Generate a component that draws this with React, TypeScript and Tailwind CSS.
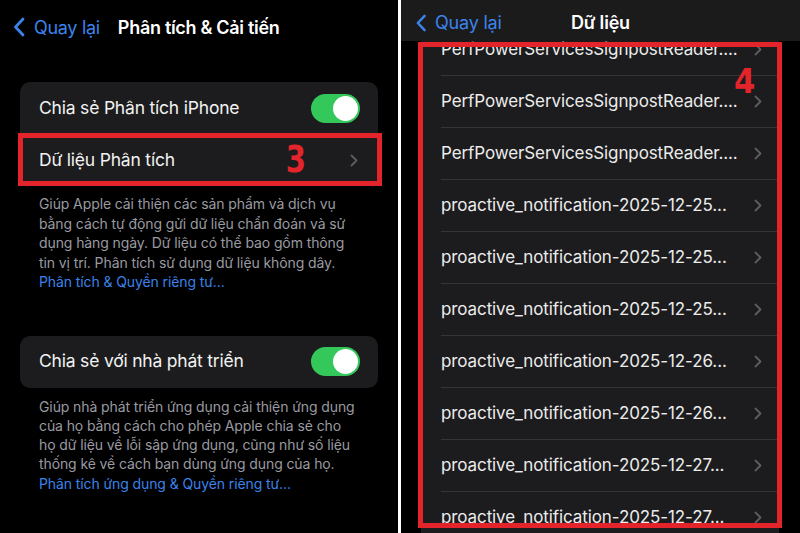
import React from "react";

function BackChevron({ className }: { className?: string }) {
  return (
    <svg viewBox="0 0 12 20" className={className} fill="none">
      <path d="M10 2 L2.5 10 L10 18" stroke="currentColor" strokeWidth="2.8" strokeLinecap="round" strokeLinejoin="round" />
    </svg>
  );
}

function CellChevron() {
  return (
    <svg viewBox="0 0 8 13" className="w-[8px] h-[13px] text-[#5c5c61]" fill="none">
      <path d="M1.5 1.5 L6.5 6.5 L1.5 11.5" stroke="currentColor" strokeWidth="1.8" strokeLinecap="round" strokeLinejoin="round" />
    </svg>
  );
}

function Toggle() {
  return (
    <div className="w-[49px] h-[29px] rounded-full bg-[#34c759] flex items-center justify-end p-[2px]">
      <div className="w-[25px] h-[25px] rounded-full bg-white" />
    </div>
  );
}

const files = [
  "PerfPowerServicesSignpostReader....",
  "PerfPowerServicesSignpostReader....",
  "PerfPowerServicesSignpostReader....",
  "proactive_notification-2025-12-25...",
  "proactive_notification-2025-12-25...",
  "proactive_notification-2025-12-25...",
  "proactive_notification-2025-12-26...",
  "proactive_notification-2025-12-26...",
  "proactive_notification-2025-12-27...",
  "proactive_notification-2025-12-27...",
];

const analyticsNote = [
  "Giúp Apple cải thiện các sản phẩm và dịch vụ",
  "bằng cách tự động gửi dữ liệu chẩn đoán và sử",
  "dụng hàng ngày. Dữ liệu có thể bao gồm thông",
  "tin vị trí. Phân tích sử dụng dữ liệu không dây.",
];

const developerNote = [
  "Giúp nhà phát triển ứng dụng cải thiện ứng dụng",
  "của họ bằng cách cho phép Apple chia sẻ cho",
  "họ dữ liệu về lỗi sập ứng dụng, cũng như số liệu",
  "thống kê về cách bạn dùng ứng dụng của họ.",
];

function Footnote({ lines, link, spacing }: { lines: string[]; link: string; spacing: string }) {
  return (
    <div className={`px-[39px] text-[14px] text-[#9a9aa0] tracking-[-0.1px] whitespace-nowrap ${spacing}`}>
      {lines.map((l, i) => (
        <p key={i}>{l}</p>
      ))}
      <p className="text-[#3b83ea]">{link}</p>
    </div>
  );
}

function SettingsPane() {
  return (
    <div className="w-[398px] h-full bg-black relative shrink-0">
      {/* navigation bar */}
      <div className="h-[54px] flex items-center pl-[13px]">
        <BackChevron className="w-[12px] h-[20px] text-[#3b83ea]" />
        <span className="ml-[9px] text-[18px] text-[#3b83ea] tracking-[-0.3px]">Quay lại</span>
        <span className="ml-[18px] text-[18px] font-semibold text-white tracking-[-0.3px]">Phân tích &amp; Cải tiến</span>
      </div>

      {/* analytics group */}
      <div className="mt-[28px] mx-[20px] rounded-[10px] bg-[#1c1c1e]">
        <div className="h-[52px] flex items-center justify-between pl-[19px] pr-[18px]">
          <span className="text-[17.5px] text-[#f2f2f2] tracking-[-0.2px]">Chia sẻ Phân tích iPhone</span>
          <Toggle />
        </div>
        <div className="h-[52px] flex items-center justify-between pl-[19px] pr-[20px]">
          <span className="text-[17.5px] text-[#f2f2f2] tracking-[-0.2px]">Dữ liệu Phân tích</span>
          <CellChevron />
        </div>
      </div>
      <div className="mt-[8px]">
        <Footnote lines={analyticsNote} link="Phân tích & Quyền riêng tư..." spacing="leading-[19.5px]" />
      </div>

      {/* developer group */}
      <div className="mt-[44px] mx-[20px] rounded-[10px] bg-[#1c1c1e]">
        <div className="h-[52px] flex items-center justify-between pl-[19px] pr-[18px]">
          <span className="text-[17.5px] text-[#f2f2f2] tracking-[-0.2px]">Chia sẻ với nhà phát triển</span>
          <Toggle />
        </div>
      </div>
      <div className="mt-[9px]">
        <Footnote lines={developerNote} link="Phân tích ứng dụng & Quyền riêng tư..." spacing="leading-[19.3px]" />
      </div>

      {/* step marker */}
      <div className="absolute left-[18px] top-[133px] w-[364px] h-[53px] border-[5px] border-[#e3242b]" />
      <span className="absolute left-[284px] top-[140px] text-[38px] leading-none font-bold text-[#e3242b] font-['DejaVu_Sans_Condensed',sans-serif] scale-x-[0.85]">3</span>
    </div>
  );
}

function DataPane() {
  return (
    <div className="w-[399px] h-full bg-black relative overflow-hidden shrink-0">
      {/* file list */}
      <div className="pt-[24px] pl-[20px] pr-[21px]">
        <div className="bg-[#1c1c1e]">
          {files.map((name, i) => (
            <div key={i} className="h-[52px] flex pl-[20px]">
              <div className="flex-1 flex items-center justify-between border-b border-[#343437] pr-[17px]">
                <span className="text-[17px] text-[#ececec] tracking-[-0.1px]">{name}</span>
                <CellChevron />
              </div>
            </div>
          ))}
        </div>
      </div>

      {/* navigation bar */}
      <div className="absolute top-0 left-0 right-0 h-[41px] bg-[#1b1b1c] grid grid-cols-[1fr_auto_1fr] items-center pt-[4px] z-10">
        <div className="flex items-center pl-[14px]">
          <BackChevron className="w-[12px] h-[18px] text-[#3b83ea]" />
          <span className="ml-[8px] text-[18px] text-[#3b83ea] tracking-[-0.2px]">Quay lại</span>
        </div>
        <span className="text-[18px] font-semibold text-white tracking-[-0.2px]">Dữ liệu</span>
        <div />
      </div>

      {/* step marker */}
      <div className="absolute left-[17px] top-[42px] w-[364px] h-[486px] border-[5px] border-[#e3242b] z-20" />
      <span className="absolute left-[333px] top-[64px] text-[34px] leading-none font-bold text-[#e3242b] font-['DejaVu_Sans_Condensed',sans-serif] z-20">4</span>
    </div>
  );
}

export default function App() {
  return (
    <div className="w-[800px] h-[533px] flex bg-white overflow-hidden font-['Inter','Noto_Sans',sans-serif]">
      <SettingsPane />
      <div className="w-[3px] shrink-0" />
      <DataPane />
    </div>
  );
}
